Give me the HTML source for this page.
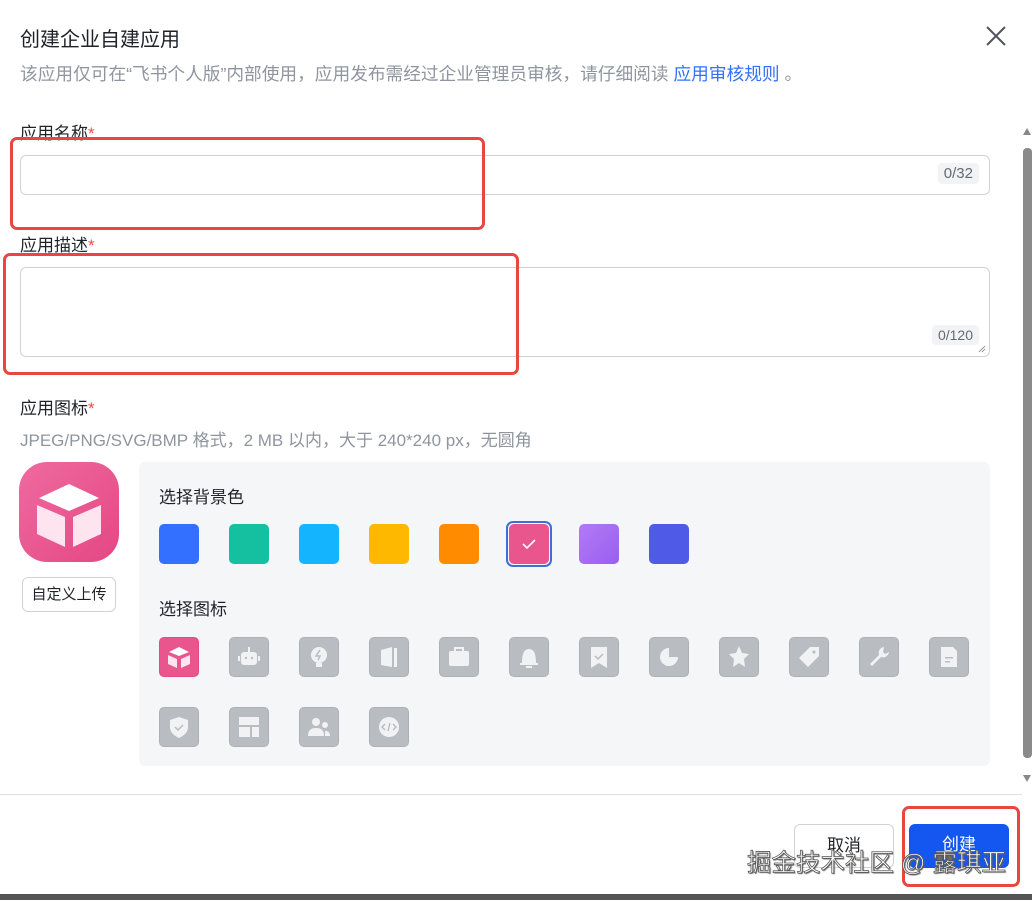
<!DOCTYPE html>
<html><head><meta charset="utf-8">
<style>
*{margin:0;padding:0;box-sizing:border-box}
body{width:1032px;height:900px;background:#fff;position:relative;overflow:hidden;font-family:"Liberation Sans","Noto Sans CJK SC",sans-serif;color:#1f2329}
.a{position:absolute}
.t{font-size:20px;left:20px;top:23px}
.sub{font-size:17.7px;left:20px;top:60px;color:#8f959e;white-space:nowrap}
.sub span{color:#3370ff}
.lbl{font-size:17px;left:20px;color:#1f2329}
.lbl i{color:#f54a45;font-style:normal}
.inp{left:20px;width:970px;border:1px solid #d0d3d6;border-radius:6px;background:#fff}
.cnt{position:absolute;right:10px;background:#f2f3f5;color:#646a73;font-size:15px;border-radius:4px;padding:2px 6px}
.red{border:3px solid #e8473f;border-radius:7px}
.panel{left:139px;top:462px;width:851px;height:304px;background:#f5f6f7;border-radius:6px}
.sw{width:40px;height:40px;border-radius:5px;top:524px}
.ic{width:40px;height:40px;border-radius:5px;background:#b9bcc1;border:1px solid #adb0b5}
.ic svg{width:38px;height:38px;display:block}
.btn{height:44px;border-radius:6px;font-size:17px;text-align:center;line-height:42px}
</style></head><body>
<div class="a t">创建企业自建应用</div>
<div class="a sub">该应用仅可在“飞书个人版”内部使用，应用发布需经过企业管理员审核，请仔细阅读 <span>应用审核规则</span> 。</div>
<svg class="a" style="left:985px;top:25px" width="22" height="22" viewBox="0 0 22 22"><path d="M2 2L20 20M20 2L2 20" stroke="#51565d" stroke-width="2"/></svg>

<div class="a lbl" style="top:119px">应用名称<i>*</i></div>
<div class="a inp" style="top:155px;height:40px"><div class="cnt" style="top:7px">0/32</div></div>
<div class="a red" style="left:10px;top:137px;width:475px;height:93px"></div>

<div class="a lbl" style="top:231px">应用描述<i>*</i></div>
<div class="a inp" style="top:267px;height:90px"><div class="cnt" style="top:57px;font-size:14px">0/120</div>
<svg class="a" style="right:3px;bottom:3px" width="8" height="8"><path d="M1 7L7 1M4 7L7 4" stroke="#999" stroke-width="1"/></svg></div>
<div class="a red" style="left:3px;top:253px;width:516px;height:122px"></div>

<div class="a lbl" style="top:394px">应用图标<i>*</i></div>
<div class="a" style="left:20px;top:426px;font-size:17px;color:#8f959e;white-space:nowrap">JPEG/PNG/SVG/BMP 格式，2 MB 以内，大于 240*240 px，无圆角</div>

<div class="a" style="left:19px;top:462px;width:100px;height:100px;border-radius:28px;background:linear-gradient(135deg,#ef6aa0,#e44784)">
<svg width="100" height="100" viewBox="0 0 100 100"><path d="M50 22L80 36L50 49L20 36Z" fill="#fff"/><path d="M18 43L46 55V85L18 72Z" fill="#fde4ee"/><path d="M82 43L54 55V85L82 72Z" fill="#fde4ee"/></svg></div>
<div class="a btn" style="left:22px;top:577px;width:94px;height:35px;border:1px solid #d0d3d6;font-size:15px;line-height:33px">自定义上传</div>

<div class="a panel"></div>
<div class="a" style="left:159px;top:483px;font-size:17px">选择背景色</div>
<div class="a sw" style="left:159px;background:#3370ff"></div>
<div class="a sw" style="left:229px;background:#14c0a0"></div>
<div class="a sw" style="left:299px;background:#14b4ff"></div>
<div class="a sw" style="left:369px;background:#ffb800"></div>
<div class="a sw" style="left:439px;background:#ff8c00"></div>
<div class="a" style="left:506px;top:521px;width:46px;height:46px;border:2px solid #3f6fd6;border-radius:7px;padding:1px"><div style="width:40px;height:40px;border-radius:5px;background:#e8568d"><svg width="40" height="40"><path d="M14 20L18 24L26 16" stroke="#fff" stroke-width="1.6" fill="none"/></svg></div></div>
<div class="a sw" style="left:579px;background:linear-gradient(135deg,#b27af5,#9a5ef0)"></div>
<div class="a sw" style="left:649px;background:#4f5ae6"></div>

<div class="a" style="left:159px;top:595px;font-size:17px">选择图标</div>
<div class="a ic" style="left:159px;top:637px;background:#e8568d;border-color:#e04d85"><svg viewBox="0 0 38 38"><path d="M19 9L29 14L19 18L9 14Z" fill="#fff"/><path d="M8 17L17 21V30L8 26Z" fill="#fde4ee"/><path d="M30 17L21 21V30L30 26Z" fill="#fde4ee"/></svg></div>
<div class="a ic" style="left:229px;top:637px"><svg viewBox="0 0 38 38"><rect x="11" y="14" width="16" height="13" rx="3" fill="#f1f2f3"/><rect x="18" y="9" width="2" height="5" fill="#f1f2f3"/><rect x="8" y="18" width="2" height="5" fill="#f1f2f3"/><rect x="28" y="18" width="2" height="5" fill="#f1f2f3"/><circle cx="16" cy="20" r="1.2" fill="#b9bcc1"/><circle cx="22" cy="20" r="1.2" fill="#b9bcc1"/></svg></div>
<div class="a ic" style="left:299px;top:637px"><svg viewBox="0 0 38 38"><circle cx="19" cy="17" r="8" fill="#f1f2f3"/><rect x="16" y="25" width="6" height="4" fill="#f1f2f3"/><path d="M20 12L16 18H20L18 22" stroke="#b9bcc1" stroke-width="1.5" fill="none"/></svg></div>
<div class="a ic" style="left:369px;top:637px"><svg viewBox="0 0 38 38"><path d="M11 12L22 9V29L11 27Z" fill="#f1f2f3"/><rect x="24" y="10" width="3" height="19" fill="#f1f2f3"/></svg></div>
<div class="a ic" style="left:439px;top:637px"><svg viewBox="0 0 38 38"><rect x="9" y="13" width="20" height="15" rx="2" fill="#f1f2f3"/><path d="M15 13V10H23V13" stroke="#f1f2f3" stroke-width="2" fill="none"/></svg></div>
<div class="a ic" style="left:509px;top:637px"><svg viewBox="0 0 38 38"><path d="M12 25C12 18 13 11 19 11C25 11 26 18 26 25H28V27H10V25Z" fill="#f1f2f3"/><rect x="16" y="28" width="6" height="2" fill="#f1f2f3"/></svg></div>
<div class="a ic" style="left:579px;top:637px"><svg viewBox="0 0 38 38"><path d="M11 9H27V30L19 25L11 30Z" fill="#f1f2f3"/><path d="M15 18L18 21L23 16" stroke="#b9bcc1" stroke-width="1.5" fill="none"/></svg></div>
<div class="a ic" style="left:649px;top:637px"><svg viewBox="0 0 38 38"><path d="M19 10A9 9 0 1 0 28 19H19Z" fill="#f1f2f3"/></svg></div>
<div class="a ic" style="left:719px;top:637px"><svg viewBox="0 0 38 38"><path d="M19 8L22 15L29 16L24 21L25 29L19 25L13 29L14 21L9 16L16 15Z" fill="#f1f2f3"/></svg></div>
<div class="a ic" style="left:789px;top:637px"><svg viewBox="0 0 38 38"><path d="M20 9H29V18L18 29L9 20Z" fill="#f1f2f3"/><circle cx="24" cy="14" r="1.5" fill="#b9bcc1"/></svg></div>
<div class="a ic" style="left:859px;top:637px"><svg viewBox="0 0 38 38"><path d="M24 9A6 6 0 0 0 19 17L10 26L12 28L21 19A6 6 0 0 0 29 14L25 16L23 14Z" fill="#f1f2f3"/></svg></div>
<div class="a ic" style="left:929px;top:637px"><svg viewBox="0 0 38 38"><path d="M11 9H23L27 13V29H11Z" fill="#f1f2f3"/><rect x="15" y="19" width="8" height="1.5" fill="#b9bcc1"/><rect x="15" y="23" width="5" height="1.5" fill="#b9bcc1"/></svg></div>
<div class="a ic" style="left:159px;top:707px"><svg viewBox="0 0 38 38"><path d="M19 9L28 12V19C28 25 23 28 19 30C15 28 10 25 10 19V12Z" fill="#f1f2f3"/><path d="M15 19L18 22L23 17" stroke="#b9bcc1" stroke-width="1.5" fill="none"/></svg></div>
<div class="a ic" style="left:229px;top:707px"><svg viewBox="0 0 38 38"><rect x="9" y="9" width="20" height="8" fill="#f1f2f3"/><rect x="9" y="19" width="11" height="10" fill="#f1f2f3"/><rect x="22" y="19" width="7" height="10" fill="#f1f2f3"/></svg></div>
<div class="a ic" style="left:299px;top:707px"><svg viewBox="0 0 38 38"><circle cx="16" cy="14" r="4" fill="#f1f2f3"/><path d="M8 28C8 22 11 20 16 20C21 20 24 22 24 28Z" fill="#f1f2f3"/><circle cx="25" cy="17" r="3" fill="#f1f2f3"/><path d="M25 28V23C28 23 30 24 30 28Z" fill="#f1f2f3"/></svg></div>
<div class="a ic" style="left:369px;top:707px"><svg viewBox="0 0 38 38"><circle cx="19" cy="19" r="10" fill="#f1f2f3"/><path d="M15 16L12 19L15 22M23 16L26 19L23 22M20 15L18 23" stroke="#b9bcc1" stroke-width="1.4" fill="none"/></svg></div>

<div class="a" style="left:0;top:794px;width:1022px;height:1px;background:#dee0e3"></div>
<div class="a" style="left:1022px;top:126px;width:10px;height:664px">
<svg class="a" style="left:0;top:0" width="10" height="10"><path d="M1 9L5 2L9 9Z" fill="#888"/></svg>
<div class="a" style="left:1px;top:22px;width:9px;height:610px;background:#8a8a8a;border-radius:4px"></div>
<svg class="a" style="left:0;top:648px" width="10" height="10"><path d="M1 1L5 8L9 1Z" fill="#888"/></svg></div>

<div class="a btn" style="left:794px;top:824px;width:100px;border:1px solid #d0d3d6;background:#fff">取消</div>
<div class="a btn" style="left:909px;top:824px;width:100px;background:#1456f0;color:#fff">创建</div>
<div class="a red" style="left:902px;top:806px;width:118px;height:81px"></div>
<div class="a" style="left:747px;top:844px;font-size:24.5px;color:#fff;-webkit-text-stroke:0.8px #555;text-shadow:1px 1px 1px #666;white-space:nowrap">掘金技术社区 @ 露琪亚</div>
<div class="a" style="left:0;top:894px;width:1032px;height:6px;background:#555"></div>
</body></html>
